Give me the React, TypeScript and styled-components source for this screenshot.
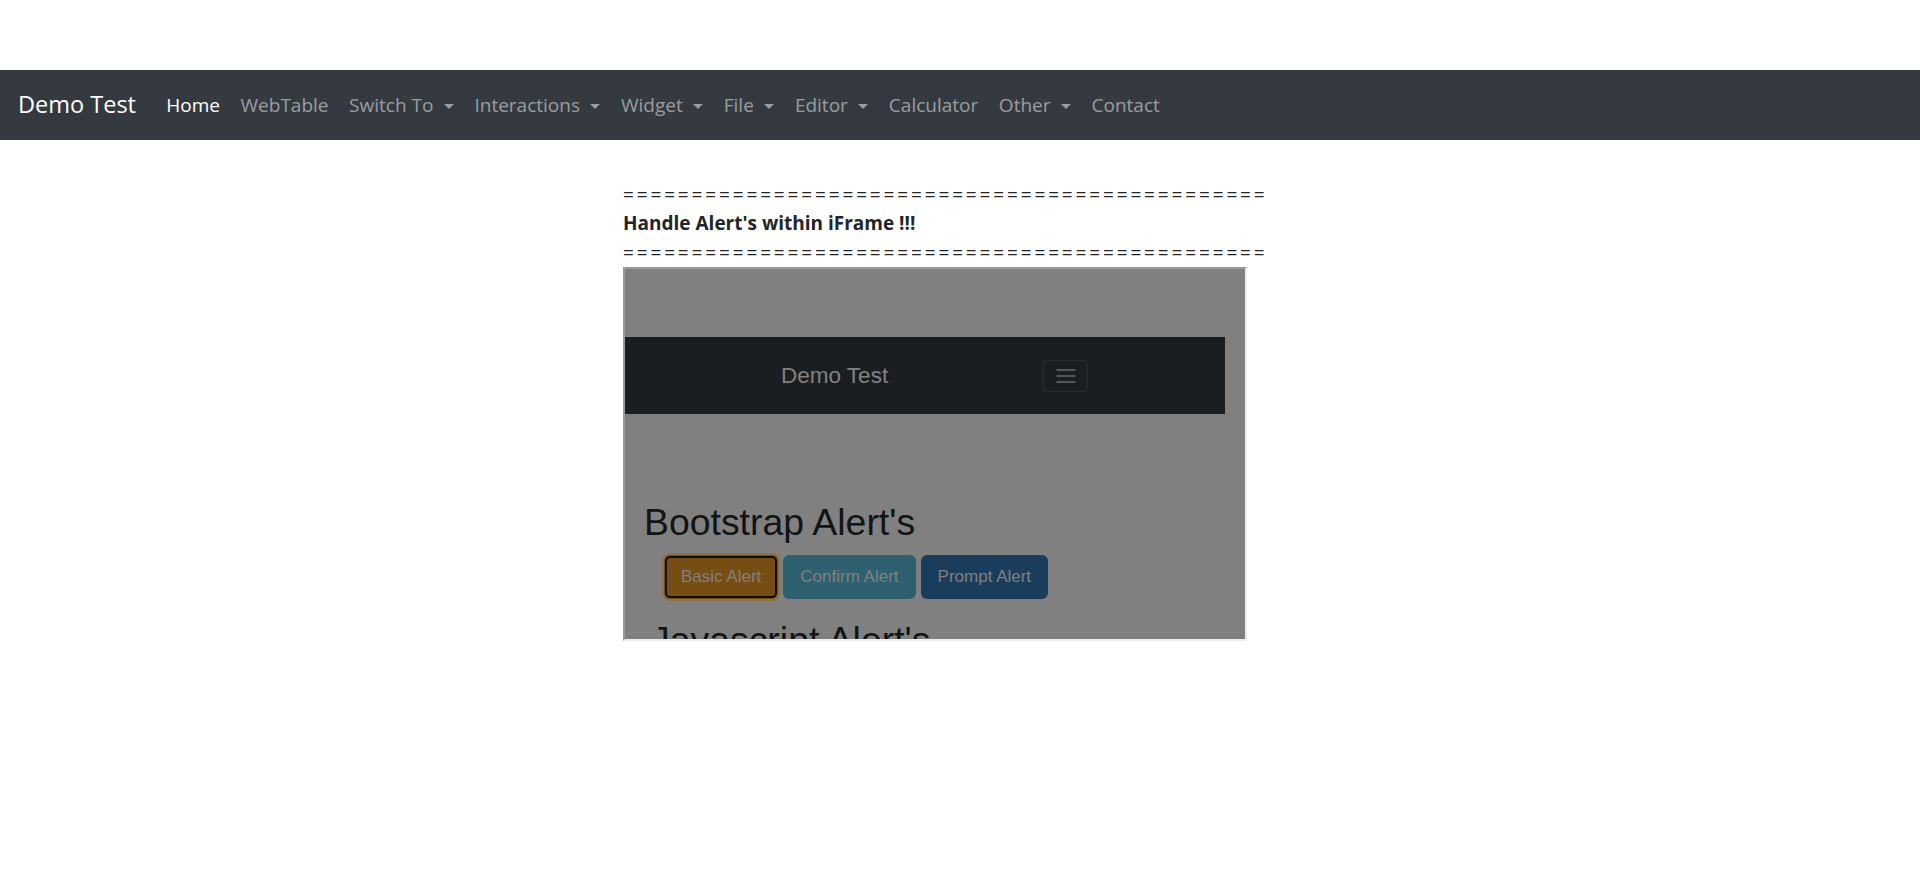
import React from "react";
import styled, { createGlobalStyle, css } from "styled-components";

const GlobalStyle = createGlobalStyle`
  html, body { margin: 0; padding: 0; background: #ffffff; }
  body { font-family: "Open Sans", "Noto Sans", sans-serif; color: #212529; }
  * { box-sizing: border-box; }
`;

const Page = styled.div`
  padding-top: 70px;
  min-height: 887px;
`;

const Navbar = styled.nav`
  height: 70px;
  background: #343a40;
  display: flex;
  align-items: center;
  padding: 0 16px 0 18px;
`;

const Brand = styled.a`
  font-size: 23.5px;
  line-height: 1;
  color: #ffffff;
  margin-right: 20px;
  text-decoration: none;
  white-space: nowrap;
`;

const NavList = styled.ul`
  list-style: none;
  margin: 0;
  padding: 0;
  display: flex;
  align-items: center;
`;

const NavItem = styled.li`
  display: flex;
`;

const NavLink = styled.a<{ $active?: boolean; $dropdown?: boolean }>`
  display: flex;
  align-items: center;
  padding: 0 10.3px;
  font-size: 19px;
  line-height: 28px;
  white-space: nowrap;
  text-decoration: none;
  color: ${(p) => (p.$active ? "#ffffff" : "rgba(255,255,255,0.5)")};
  ${(p) =>
    p.$dropdown &&
    css`
      &::after {
        content: "";
        display: inline-block;
        margin-left: 0.55em;
        margin-top: 2px;
        border-top: 5px solid;
        border-right: 5px solid transparent;
        border-left: 5px solid transparent;
      }
    `}
`;

const Main = styled.main`
  padding: 40px 0 0 623px;
`;

const Rule = styled.div`
  font-size: 19px;
  line-height: 29px;
  letter-spacing: 2.85px;
  color: #212529;
  white-space: nowrap;
`;

const Title = styled.h5`
  margin: 0;
  font-size: 19px;
  font-weight: 700;
  line-height: 29px;
  color: #212529;
  white-space: nowrap;
`;

const Frame = styled.div`
  width: 624px;
  height: 374px;
  border: 2px solid;
  border-color: #9a9a9a #ececec #ececec #9a9a9a;
  background: #808080;
  overflow: hidden;
`;

const FrameDoc = styled.div`
  padding-top: 68px;
  font-family: "Liberation Sans", Arial, sans-serif;
`;

const InnerNav = styled.div`
  width: 600px;
  height: 77px;
  background: #1b1e21;
  display: flex;
  align-items: center;
  justify-content: space-between;
  padding: 0 137px 0 156px;
`;

const InnerBrand = styled.span`
  font-size: 22.5px;
  color: #808080;
`;

const Toggler = styled.span`
  width: 45px;
  height: 32px;
  border: 1px solid #2b2e31;
  border-radius: 4px;
  display: flex;
  align-items: center;
  justify-content: center;
`;

const Heading = styled.h1<{ $indent: number; $gap: number }>`
  margin: ${(p) => p.$gap}px 0 0;
  padding-left: ${(p) => p.$indent}px;
  font-size: 37.4px;
  font-weight: 400;
  line-height: 1.1;
  color: #121416;
  white-space: nowrap;
`;

const ButtonRow = styled.div`
  display: flex;
  gap: 5px;
  margin-top: 12px;
  padding-left: 39px;
`;

const AlertButton = styled.button<{ $bg: string; $focus?: boolean }>`
  font-family: "Liberation Sans", Arial, sans-serif;
  font-size: 17px;
  line-height: 22px;
  padding: 10px 16px;
  border: 1px solid transparent;
  border-radius: 6px;
  color: #808080;
  background: ${(p) => p.$bg};
  cursor: pointer;
  ${(p) =>
    p.$focus &&
    css`
      box-shadow: inset 0 0 0 2px #0e0e0e, 0 0 0 2px #8d7440;
    `}
`;

const navItems: { label: string; active?: boolean; dropdown?: boolean }[] = [
  { label: "Home", active: true },
  { label: "WebTable" },
  { label: "Switch To", dropdown: true },
  { label: "Interactions", dropdown: true },
  { label: "Widget", dropdown: true },
  { label: "File", dropdown: true },
  { label: "Editor", dropdown: true },
  { label: "Calculator" },
  { label: "Other", dropdown: true },
  { label: "Contact" },
];

const rule = "=".repeat(47);

export default function App() {
  return (
    <>
      <GlobalStyle />
      <Page>
        <Navbar>
          <Brand href="#">Demo Test</Brand>
          <NavList>
            {navItems.map((item) => (
              <NavItem key={item.label}>
                <NavLink href="#" $active={item.active} $dropdown={item.dropdown}>
                  {item.label}
                </NavLink>
              </NavItem>
            ))}
          </NavList>
        </Navbar>
        <Main>
          <Rule>{rule}</Rule>
          <Title>Handle Alert's within iFrame !!!</Title>
          <Rule>{rule}</Rule>
          <Frame>
            <FrameDoc>
              <InnerNav>
                <InnerBrand>Demo Test</InnerBrand>
                <Toggler>
                  <svg width="20" height="16" viewBox="0 0 20 16">
                    <g stroke="#55585b" strokeWidth="2">
                      <line x1="0.5" y1="2" x2="19.5" y2="2" />
                      <line x1="0.5" y1="8" x2="19.5" y2="8" />
                      <line x1="0.5" y1="14" x2="19.5" y2="14" />
                    </g>
                  </svg>
                </Toggler>
              </InnerNav>
              <Heading $indent={19} $gap={88}>Bootstrap Alert's</Heading>
              <ButtonRow>
                <AlertButton $bg="#764d12" $focus>Basic Alert</AlertButton>
                <AlertButton $bg="#2e606f">Confirm Alert</AlertButton>
                <AlertButton $bg="#1a3d5c">Prompt Alert</AlertButton>
              </ButtonRow>
              <Heading $indent={26} $gap={21}>Javascript Alert's</Heading>
            </FrameDoc>
          </Frame>
        </Main>
      </Page>
    </>
  );
}
